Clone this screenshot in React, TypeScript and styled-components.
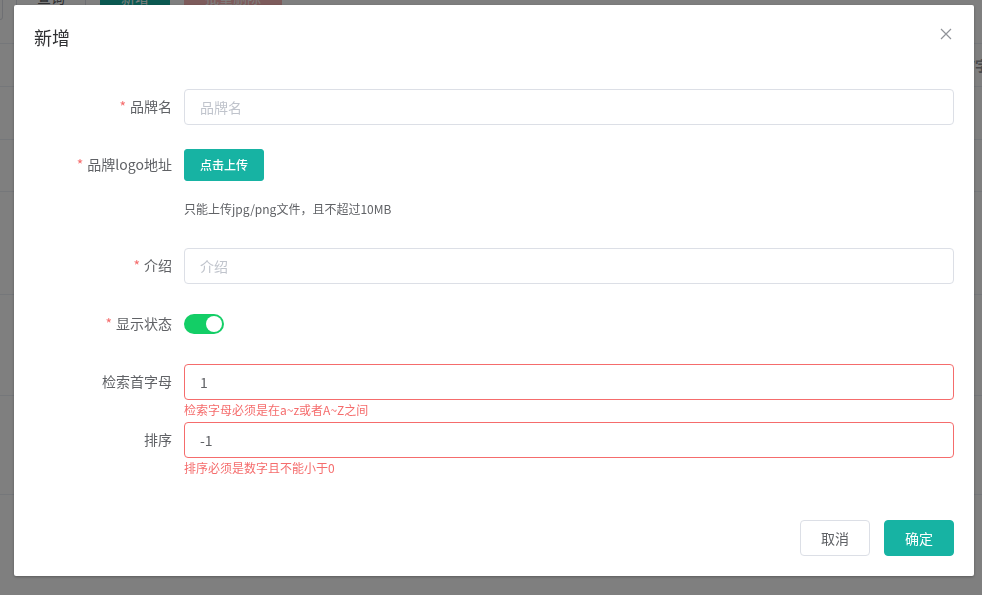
import React, { FC } from 'react';
import styled, { createGlobalStyle } from 'styled-components';

const GlobalStyle = createGlobalStyle`
  html, body {
    margin: 0;
    padding: 0;
    overflow: hidden;
    font-family: "Noto Sans CJK SC", "Liberation Sans", sans-serif;
  }
`;

/* ---------- page behind the dialog ---------- */

const Page = styled.div`
  width: 100vw;
  height: 100vh;
  background: #fff;
  overflow: hidden;
`;

const Toolbar = styled.div`
  display: flex;
  align-items: center;
  gap: 14px;
  margin-top: -19px;
  height: 32px;
`;

const SearchBox = styled.div`
  width: 2px;
  height: 36px;
  margin-top: 8px;
  margin-right: -1px;
  border: 1px solid #dcdfe6;
  border-left: none;
  border-radius: 0 4px 4px 0;
`;

const ToolButton = styled.button<{ kind?: 'plain' | 'primary' | 'danger' }>`
  height: 32px;
  padding: 0 20px;
  font-size: 14px;
  line-height: 14px;
  font-family: inherit;
  border-radius: 3px;
  border: 1px solid
    ${p => (p.kind === 'primary' ? '#17b3a3' : p.kind === 'danger' ? '#fab6b6' : '#dcdfe6')};
  background: ${p => (p.kind === 'primary' ? '#17b3a3' : p.kind === 'danger' ? '#fab6b6' : '#fff')};
  color: ${p => (p.kind === 'plain' || !p.kind ? '#606266' : '#fff')};
`;

const Table = styled.div`
  margin-top: 30px;
`;

const TableRow = styled.div<{ h: number }>`
  height: ${p => p.h}px;
  border-top: 1px solid #ebeef5;
  box-sizing: border-box;
`;

const HeaderRow = styled(TableRow)`
  display: flex;
  align-items: center;
  padding-left: 933px;
  white-space: nowrap;
  font-size: 14px;
  font-weight: bold;
  color: #909399;
`;

/* ---------- dialog ---------- */

const Mask = styled.div`
  position: fixed;
  inset: 0;
  background: rgba(0, 0, 0, 0.5);
`;

const DialogWrapper = styled.div`
  position: fixed;
  inset: 0;
`;

const Dialog = styled.div`
  position: relative;
  width: 960px;
  margin: 5px 0 0 14px;
  background: #fff;
  border-radius: 2px;
  box-shadow: 0 1px 3px rgba(0, 0, 0, 0.3);
`;

const DialogHeader = styled.div`
  display: flex;
  align-items: center;
  height: 24px;
  padding: 20px 20px 10px;
`;

const DialogTitle = styled.span`
  font-size: 18px;
  line-height: 24px;
  color: #303133;
`;

const CloseButton = styled.button`
  position: absolute;
  top: 21px;
  right: 20px;
  width: 16px;
  height: 16px;
  padding: 0;
  border: none;
  background: transparent;
  display: flex;
  align-items: center;
  justify-content: center;
`;

const DialogBody = styled.div`
  padding: 30px 20px;
`;

const DialogFooter = styled.div`
  display: flex;
  justify-content: flex-end;
  gap: 14px;
  padding: 10px 20px 20px;
`;

const FooterButton = styled.button<{ primary?: boolean }>`
  height: 36px;
  padding: 0 20px;
  font-size: 14px;
  line-height: 14px;
  font-family: inherit;
  border-radius: 4px;
  border: 1px solid ${p => (p.primary ? '#17b3a3' : '#dcdfe6')};
  background: ${p => (p.primary ? '#17b3a3' : '#fff')};
  color: ${p => (p.primary ? '#fff' : '#606266')};
`;

/* ---------- form ---------- */

const FormItem = styled.div`
  display: flex;
  margin-bottom: 22px;
`;

const Label = styled.label`
  width: 150px;
  flex-shrink: 0;
  box-sizing: border-box;
  padding-right: 12px;
  text-align: right;
  font-size: 14px;
  line-height: 34px;
  color: #606266;
`;

const Star = styled.span`
  color: #f56c6c;
  margin-right: 4px;
`;

const Content = styled.div`
  flex: 1;
  position: relative;
  font-size: 14px;
`;

const Input = styled.input<{ invalid?: boolean }>`
  display: block;
  width: 100%;
  height: 36px;
  box-sizing: border-box;
  padding: 0 15px;
  font-size: 14px;
  font-family: inherit;
  color: #606266;
  border: 1px solid ${p => (p.invalid ? '#f56c6c' : '#dcdfe6')};
  border-radius: 4px;
  outline: none;
  &::placeholder {
    color: #c0c4cc;
  }
`;

const UploadRow = styled.div`
  height: 36px;
  display: flex;
  align-items: center;
`;

const UploadButton = styled.button`
  height: 32px;
  padding: 0 15px;
  font-size: 12px;
  line-height: 12px;
  font-weight: 500;
  font-family: inherit;
  color: #fff;
  background: #17b3a3;
  border: 1px solid #17b3a3;
  border-radius: 3px;
`;

const Tip = styled.div`
  margin-top: 7px;
  height: 36px;
  display: flex;
  align-items: center;
  font-size: 12px;
  color: #606266;
`;

const SwitchRow = styled.div`
  height: 36px;
  display: flex;
  align-items: center;
`;

const Switch = styled.span<{ on: boolean }>`
  position: relative;
  display: inline-block;
  width: 40px;
  height: 20px;
  border-radius: 10px;
  background: ${p => (p.on ? '#13ce66' : '#dcdfe6')};
  &::after {
    content: '';
    position: absolute;
    top: 2px;
    left: ${p => (p.on ? '22px' : '2px')};
    width: 16px;
    height: 16px;
    border-radius: 50%;
    background: #fff;
  }
`;

const ErrorText = styled.div`
  position: absolute;
  top: 100%;
  left: 0;
  padding-top: 4px;
  font-size: 12px;
  line-height: 1;
  color: #f56c6c;
  white-space: nowrap;
`;

const CloseIcon: FC = () => (
  <svg width="12" height="12" viewBox="0 0 12 12">
    <path d="M1 1 L11 11 M11 1 L1 11" stroke="#909399" strokeWidth="1.2" fill="none" />
  </svg>
);

const App: FC = () => {
  return (
    <>
      <GlobalStyle />
      <Page>
        <Toolbar>
          <SearchBox />
          <ToolButton>查询</ToolButton>
          <ToolButton kind="primary">新增</ToolButton>
          <ToolButton kind="danger">批量删除</ToolButton>
        </Toolbar>
        <Table>
          <HeaderRow h={43}>检索首字母</HeaderRow>
          <TableRow h={53} />
          <TableRow h={52} />
          <TableRow h={103} />
          <TableRow h={101} />
          <TableRow h={99} />
          <TableRow h={60} />
        </Table>
      </Page>
      <Mask />
      <DialogWrapper>
        <Dialog>
          <DialogHeader>
            <DialogTitle>新增</DialogTitle>
            <CloseButton aria-label="关闭">
              <CloseIcon />
            </CloseButton>
          </DialogHeader>
          <DialogBody>
            <FormItem>
              <Label><Star>*</Star>品牌名</Label>
              <Content>
                <Input placeholder="品牌名" />
              </Content>
            </FormItem>
            <FormItem>
              <Label><Star>*</Star>品牌logo地址</Label>
              <Content>
                <UploadRow>
                  <UploadButton>点击上传</UploadButton>
                </UploadRow>
                <Tip>只能上传jpg/png文件，且不超过10MB</Tip>
              </Content>
            </FormItem>
            <FormItem>
              <Label><Star>*</Star>介绍</Label>
              <Content>
                <Input placeholder="介绍" />
              </Content>
            </FormItem>
            <FormItem>
              <Label><Star>*</Star>显示状态</Label>
              <Content>
                <SwitchRow>
                  <Switch on />
                </SwitchRow>
              </Content>
            </FormItem>
            <FormItem>
              <Label>检索首字母</Label>
              <Content>
                <Input invalid defaultValue="1" />
                <ErrorText>检索字母必须是在a~z或者A~Z之间</ErrorText>
              </Content>
            </FormItem>
            <FormItem>
              <Label>排序</Label>
              <Content>
                <Input invalid defaultValue="-1" />
                <ErrorText>排序必须是数字且不能小于0</ErrorText>
              </Content>
            </FormItem>
          </DialogBody>
          <DialogFooter>
            <FooterButton>取消</FooterButton>
            <FooterButton primary>确定</FooterButton>
          </DialogFooter>
        </Dialog>
      </DialogWrapper>
    </>
  );
};

export default App;
